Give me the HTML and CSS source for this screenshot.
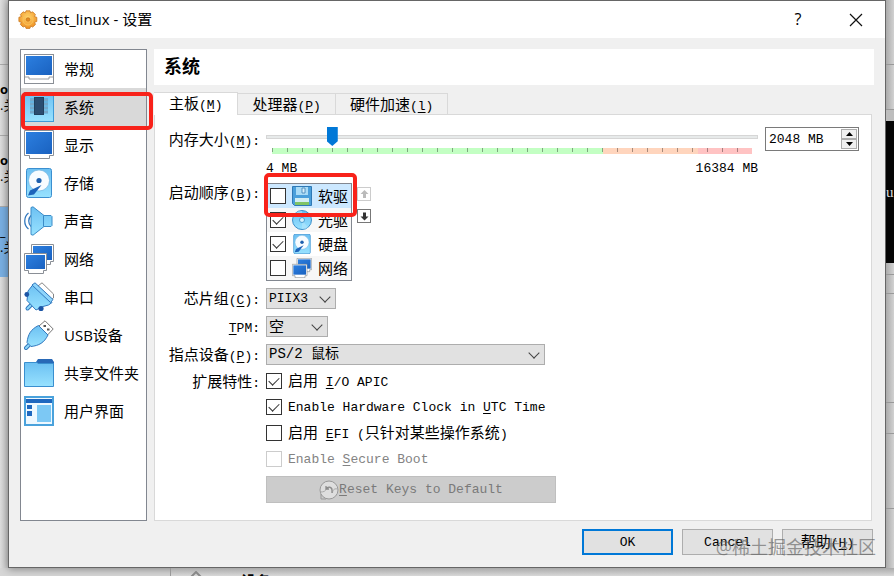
FILE: index.html
```html
<!DOCTYPE html>
<html lang="zh-CN">
<head>
  <meta charset="UTF-8" />
  <meta name="viewport" content="width=device-width, initial-scale=1.0" />
  <title>test_linux - 设置</title>
  <link rel="stylesheet" href="styles.css">
</head>
<body>
  <!-- shared icons -->
  <svg class="defs" width="0" height="0" aria-hidden="true">
    <defs>
      <linearGradient id="screen" x1="0" y1="0" x2="1" y2="1">
        <stop offset="0" stop-color="#2c7fe0" /><stop offset="1" stop-color="#1a62c0" />
      </linearGradient>
      <linearGradient id="sky" x1="0" y1="0" x2="0" y2="1">
        <stop offset="0" stop-color="#6cc0f2" /><stop offset="1" stop-color="#98e2ff" />
      </linearGradient>
      <radialGradient id="gold" cx=".5" cy=".35" r=".7">
        <stop offset="0" stop-color="#ffd36b" /><stop offset="1" stop-color="#ee8b1c" />
      </radialGradient>
      <symbol id="i-disk" viewBox="0 0 30 30">
        <rect x="2.5" y=".5" width="25" height="29" rx="2" fill="url(#sky)" stroke="#3b8fd0" />
        <circle cx="15" cy="12.500" r="10.500" fill="#f7fcff" stroke="#6aaede" stroke-width=".6" />
        <circle cx="15" cy="12.500" r="2.600" fill="#1c5fae" />
        <path d="M17.500 17 14 21.500 10 26.500 4 27.500 6 22.500Z" fill="#1c64bb" />
      </symbol>
      <symbol id="i-net" viewBox="0 0 30 30">
        <path d="M7.500.5h22v17h-3v3H15v-3H7.500Z" fill="#fff" stroke="#8a8f96" />
        <path d="M9 2h19v14H9Z" fill="url(#screen)" />
        <path d="M.5 9.500h22v17h-3v3h-15v-3h-4Z" fill="#fff" stroke="#8a8f96" />
        <path d="M2 11h19v14H2Z" fill="url(#screen)" />
      </symbol>
    </defs>
  </svg>

  <div class="desktop">
    <div class="strip strip-left">
      <div class="vm vm-blank"></div>
      <div class="vm"><b>or</b><span>.关</span></div>
      <div class="vm"><b>or</b><span>.关</span></div>
      <div class="vm vm-selected"><b>_</b><span>.关</span></div>
    </div>

    <main class="dialog">
      <header class="titlebar">
        <svg width="20" height="20" viewBox="0 0 20 20">
          <path d="M8 .8h4l.6 2 2-1 2.800 2.800-1 2 2.400.7v4.200l-2.300.8 1 2.100-2.800 2.700-2-1-.8 2.300H8l-.8-2.300-2.100 1-2.700-2.700 1-2.100-2.500-.8V7.300l2.500-.7-1-2.100 2.700-2.700 2.200 1Z" fill="url(#gold)" stroke="#c9791f" stroke-width=".8" />
          <circle cx="10" cy="10" r="5" fill="none" stroke="#f9c35a" />
          <circle cx="10" cy="9.500" r="1.800" fill="#e58a1f" stroke="#b76b18" stroke-width=".6" />
        </svg>
        <h1>test_linux - 设置</h1>
        <button class="win-btn" type="button" aria-label="帮助">?</button>
        <button class="win-btn" type="button" aria-label="关闭">
          <svg width="14" height="14" viewBox="0 0 14 14"><path d="M1 1l12 12M13 1 1 13" stroke="#111" stroke-width="1.200" /></svg>
        </button>
      </header>

      <div class="content">
        <nav class="sidebar">
          <a href="#general">
            <svg class="icon" viewBox="0 0 30 30">
              <rect x=".5" y=".5" width="29" height="29" fill="#fff" stroke="#8a8f96" />
              <rect x="2" y="2" width="26" height="19" fill="url(#screen)" />
              <path d="M1 23h4v2h20v-2h4" fill="none" stroke="#9a9da1" />
            </svg>
            常规
          </a>
          <a href="#system" class="active">
            <svg class="icon" viewBox="0 0 30 30">
              <rect x=".5" y=".5" width="29" height="29" fill="url(#sky)" stroke="#3e9bd8" />
              <path d="M6 8h18M6 12h18M6 16h18M6 20h18" stroke="#2c6d9c" stroke-width="2.500" />
              <path d="M6 8h18M6 12h18M6 16h18M6 20h18" stroke="#bfe6fa" />
              <rect x="10.500" y="5.500" width="9" height="17" fill="#2b4d70" stroke="#20415f" />
            </svg>
            系统
          </a>
          <a href="#display">
            <svg class="icon" viewBox="0 0 30 30">
              <path d="M.5.500h29v25h-4v3h-20v-3h-5Z" fill="#fff" stroke="#8a8f96" />
              <rect x="2" y="2" width="26" height="22" fill="url(#screen)" />
            </svg>
            显示
          </a>
          <a href="#storage">
            <svg class="icon"><use href="#i-disk" /></svg>
            存储
          </a>
          <a href="#audio">
            <svg class="icon" viewBox="0 0 30 30">
              <path d="M4.500 7c-5 4-5 12 0 16M7 9.500c-3 3-3 8 0 11" fill="none" stroke="#3278be" stroke-width="1.300" />
              <path d="M7 1.500 9 .8 20 9.500h7l1 1v9l-1 1h-7L9 29.200 7 28.500Z" fill="url(#sky)" stroke="#3b8cc8" />
              <path d="M19.500 9.500v11" stroke="#3b8cc8" />
            </svg>
            声音
          </a>
          <a href="#network">
            <svg class="icon"><use href="#i-net" /></svg>
            网络
          </a>
          <a href="#serial">
            <svg class="icon" viewBox="0 0 30 30">
              <path d="M14 4 18 .8 29.500 12v4l-3 2Z" fill="#fff" stroke="#858585" />
              <path d="M3.500 26.500 7 23" stroke="#3278be" stroke-width="4" stroke-linecap="round" />
              <path d="M3.500 26.500 7 23" stroke="#8fd8fb" stroke-width="2" stroke-linecap="round" />
              <path d="M9.500 2 28 20.500 24.500 23 19 24.500 12 28 3 18.500 4 9Z" fill="url(#sky)" stroke="#3278be" />
              <path d="M8 3 11 .8 29 17.500 26.500 20.500Z" fill="#8ed5fb" stroke="#3278be" />
              <circle cx="2.800" cy="12.500" r="2.400" fill="#1c55a5" /><circle cx="17" cy="26.500" r="2.600" fill="#1c55a5" />
            </svg>
            串口
          </a>
          <a href="#usb">
            <svg class="icon" viewBox="0 0 30 30">
              <path d="M15 6 21 .8 29.200 9 23 15.500Z" fill="#fff" stroke="#777" />
              <path d="M19.500 5h2.500v2h-2.500ZM23 8.500h2.500v2H23Z" fill="#555" />
              <path d="M2 28 5.500 24.500" stroke="#3278be" stroke-width="4" stroke-linecap="round" />
              <path d="M2 28 5.500 24.500" stroke="#8fd8fb" stroke-width="2" stroke-linecap="round" />
              <path d="M14.500 5.500 24 15c-4 8-9 10.500-17 11.500L3 22.500C4 14.500 6.500 9.500 14.500 5.500Z" fill="url(#sky)" stroke="#3278be" />
            </svg>
            USB设备
          </a>
          <a href="#shared">
            <svg class="icon" viewBox="0 0 30 30">
              <path d="M12 4 14 1h14l2 3v3H12Z" fill="#2969b7" />
              <path d="M.5 4.500H13l1 1h15.500v23H.500Z" fill="url(#sky)" stroke="#3a8fcf" />
            </svg>
            共享文件夹
          </a>
          <a href="#ui">
            <svg class="icon" viewBox="0 0 30 30">
              <rect x="1" y="1" width="28" height="28" fill="#eef8ff" stroke="#4aa2dc" stroke-width="2" />
              <rect x="2" y="3" width="26" height="4" fill="#1f68bf" />
              <path d="M3 9h5v4H3ZM3 15h5v5H3Z" fill="#1f68bf" />
              <rect x="13" y="9" width="14" height="17" fill="#7cc8f4" />
            </svg>
            用户界面
          </a>
        </nav>

        <section class="panel">
          <h2>系统</h2>
          <div class="tabs" role="tablist">
            <button class="tab selected" type="button" role="tab" aria-selected="true">主板<span class="en">(<u>M</u>)</span></button>
            <button class="tab" type="button" role="tab">处理器<span class="en">(<u>P</u>)</span></button>
            <button class="tab" type="button" role="tab">硬件加速<span class="en">(<u>l</u>)</span></button>
          </div>

          <form class="pane">
            <label class="name name-memory" for="memory">内存大小<span class="en">(<u>M</u>):</span></label>
            <div class="memory">
              <div class="slider">
                <input type="range" id="memory" min="4" max="16384" value="2048">
                <div class="scale"></div>
                <div class="limits en"><span>4 MB</span><span>16384 MB</span></div>
              </div>
              <div class="spin">
                <input class="en" type="text" value="2048 MB" aria-label="内存大小">
                <div class="spin-buttons">
                  <button type="button" aria-label="增加"><svg width="7" height="4" viewBox="0 0 7 4"><path d="M0 4 3.500 0 7 4Z" /></svg></button>
                  <button type="button" aria-label="减少"><svg width="7" height="4" viewBox="0 0 7 4"><path d="M0 0 3.500 4 7 0Z" /></svg></button>
                </div>
              </div>
            </div>

            <span class="name name-short">启动顺序<span class="en">(<u>B</u>):</span></span>
            <div class="boot">
              <div class="boot-list">
                <label class="boot-item current">
                  <input type="checkbox">
                  <svg class="icon-small" viewBox="0 0 20 20">
                    <path d="M.5.500h19v19h-17l-2-2Z" fill="#4a9fdb" stroke="#2f79b5" />
                    <path d="M4 1h12v8H4Z" fill="#a9dbf6" /><path d="M10 2h3v5h-3Z" fill="#d9f0fb" stroke="#3a7fb5" stroke-width=".8" />
                    <path d="M3 12h14v7H3Z" fill="#d2edf3" /><path d="M3 16h14v3H3Z" fill="#80c466" />
                  </svg>
                  软驱
                </label>
                <label class="boot-item">
                  <input type="checkbox" checked>
                  <svg class="icon-small" viewBox="0 0 20 20">
                    <circle cx="10" cy="10" r="9.500" fill="url(#sky)" stroke="#3d8fc9" />
                    <path d="M10 10 4 2.500A9 9 0 0 1 10 1ZM10 10l6 7.500a9 9 0 0 1-6 1.500Z" fill="#b4e6fc" opacity=".6" />
                    <circle cx="10" cy="10" r="2.500" fill="#d5f1fd" stroke="#4b9ed2" />
                  </svg>
                  光驱
                </label>
                <label class="boot-item">
                  <input type="checkbox" checked>
                  <svg class="icon-small"><use href="#i-disk" /></svg>
                  硬盘
                </label>
                <label class="boot-item">
                  <input type="checkbox">
                  <svg class="icon-small"><use href="#i-net" /></svg>
                  网络
                </label>
              </div>
              <div class="move">
                <button type="button" disabled aria-label="上移"><svg width="9" height="9" viewBox="0 0 9 9"><path d="M4.500 0 8.500 4H6v4H3V4H.5Z" /></svg></button>
                <button type="button" aria-label="下移"><svg width="9" height="9" viewBox="0 0 9 9"><path d="M4.500 8.500.5 4.500H3V.5h3v4h2.500Z" /></svg></button>
              </div>
            </div>

            <label class="name" for="chipset">芯片组<span class="en">(<u>C</u>):</span></label>
            <div class="select select-chipset"><select class="en" id="chipset"><option>PIIX3</option></select></div>

            <label class="name" for="tpm"><span class="en"><u>T</u>PM:</span></label>
            <div class="select select-tpm"><select id="tpm"><option>空</option></select></div>

            <label class="name" for="pointing">指点设备<span class="en">(<u>P</u>):</span></label>
            <div class="select select-pointing"><select class="mixed" id="pointing"><option>PS/2 鼠标</option></select></div>

            <span class="name name-short">扩展特性<span class="en">:</span></span>
            <div class="features">
              <label><input type="checkbox" checked><span>启用<span class="en"> <u>I</u>/O APIC</span></span></label>
              <label><input type="checkbox" checked><span class="en">Enable Hardware Clock in <u>U</u>TC Time</span></label>
              <label><input type="checkbox"><span>启用<span class="en"> <u>E</u>FI (</span>只针对某些操作系统<span class="en">)</span></span></label>
              <label class="off"><input type="checkbox" disabled><span class="en">Enable <u>S</u>ecure Boot</span></label>
              <button class="reset en" type="button" disabled>
                <svg width="20" height="20" viewBox="0 0 20 20">
                  <circle cx="10" cy="10" r="9" fill="#dedede" stroke="#999" />
                  <path d="M1.500 12c3 0 5-.5 6-3.500M18.500 9c-4-1-5 2-5 4" fill="none" stroke="#aaa" />
                  <path d="M7 9c2-3 6-2 6 1v3M7 6v3h3" fill="none" stroke="#8b8b8b" stroke-width="1.300" />
                  <path d="M2 14v5h5" fill="none" stroke="#999" />
                </svg>
                <span><u>R</u>eset Keys to Default</span>
              </button>
            </div>
          </form>
        </section>
      </div>

      <footer class="actions">
        <button class="primary en" type="button">OK</button>
        <button class="en" type="button">Cancel</button>
        <button type="button">帮助<span class="en">(<u>H</u>)</span></button>
        <span class="watermark">@稀土掘金技术社区</span>
      </footer>
    </main>

    <div class="strip strip-right">
      <div class="row row-first"></div>
      <div class="row row-second"></div>
      <div class="preview">u</div>
      <div class="row row-gap"></div>
      <div class="row row-small"></div>
      <div class="row row-tall"></div>
      <div class="row row-medium"></div>
      <div class="row row-last"></div>
    </div>

    <div class="strip strip-bottom">
      <svg width="14" height="14" viewBox="0 0 14 14"><path d="M1 7 7 1l6 6" fill="none" stroke="#888" stroke-width="2" /></svg>
      <b>设备</b>
    </div>
  </div>
</body>
</html>
```

FILE: styles.css
```css
* {
  box-sizing: border-box;
}
body {
  margin: 0;
  background: #d6d6d6;
  color: #000;
  font-family: "Open Sans", "Noto Sans CJK SC", sans-serif;
  font-size: 15px;
  line-height: 21px;
}
button, input, select {
  margin: 0;
  padding: 0;
  color: inherit;
  font: inherit;
}
svg {
  display: block;
  flex: none;
}
u {
  text-underline-offset: 2px;
}
.defs {
  position: absolute;
}
.en {
  font-family: "Liberation Mono", "Noto Sans CJK SC", monospace;
  font-size: 13px;
  white-space: pre;
}
.desktop {
  display: grid;
  grid-template-columns: 9px minmax(0, 1fr) 8px;
  grid-template-rows: 1fr 8px;
  height: 100vh;
  overflow: hidden;
}

/* windows behind the dialog */
.strip {
  overflow: hidden;
}
.strip-left {
  background: linear-gradient(to right, #dedede, #c4c4c4);
}
.vm {
  height: 71px;
  padding-top: 16px;
  border-top: 1px solid #aaa;
  font-size: 13px;
  line-height: 16px;
  white-space: nowrap;
}
.vm b, .vm span {
  display: block;
}
.vm-blank {
  height: 64px;
  border: 0;
}
.vm-selected {
  background: #79afe2;
}
.strip-right {
  background: linear-gradient(to right, #ababab, #d2d2d2);
}
.row {
  border-bottom: 1px solid #999;
}
.row-first {
  height: 65px;
}
.row-second {
  height: 45px;
}
.preview {
  height: 153px;
  padding-top: 61px;
  border-top: 11px solid #bdbdbd;
  background: #050505;
  color: #ddd;
  font-family: "Liberation Serif", serif;
}
.row-gap {
  height: 12px;
}
.row-small {
  height: 19px;
}
.row-tall {
  height: 109px;
}
.row-medium {
  height: 31px;
}
.row-last {
  height: 75px;
}
.strip-bottom {
  grid-column: 1 / -1;
  display: flex;
  gap: 38px;
  margin-left: 170px;
  padding: 3px 0 0 18px;
  border-left: 1px solid #999;
  background: linear-gradient(#aaa, #d8d8d8);
}

/* dialog */
.dialog {
  display: flex;
  flex-direction: column;
  margin-left: -1px;
  border: 1px solid #666;
  background: #f0f0f0;
  box-shadow: 0 1px 8px rgba(0, 0, 0, 0.4);
}
.titlebar {
  display: flex;
  align-items: center;
  height: 37px;
  padding-left: 9px;
  background: #fff;
}
.titlebar h1 {
  flex: 1;
  margin: 0 0 0 5px;
  font-size: 15px;
  font-weight: 400;
}
.win-btn {
  display: flex;
  align-items: center;
  justify-content: center;
  width: 58px;
  height: 37px;
  border: 0;
  background: none;
  font-size: 16px;
}
.content {
  display: flex;
  flex: 1;
  gap: 7px;
  padding: 11px 11px 0;
}
.sidebar {
  flex: none;
  width: 127px;
  border: 1px solid #828790;
  background: #fff;
}
.sidebar a {
  position: relative;
  display: flex;
  align-items: center;
  gap: 10px;
  height: 38px;
  padding-left: 3px;
  color: #000;
  text-decoration: none;
  white-space: nowrap;
}
.sidebar .active {
  background: #d9d9d9;
}
.icon {
  width: 30px;
  height: 30px;
}
/* red highlight frames */
.sidebar .active::after,
.current::after {
  content: "";
  position: absolute;
  z-index: 1;
  border: 4px solid #f8221a;
  border-radius: 5px;
  pointer-events: none;
}
.sidebar .active::after {
  inset: 4px -7px -4px 0;
}
.panel {
  display: flex;
  flex: 1;
  flex-direction: column;
  min-width: 0;
}
.panel h2 {
  margin: 0 0 7px;
  padding: 7px 10px 8px;
  background: #fff;
  font-size: 18px;
  line-height: 21px;
}
.tabs {
  display: flex;
  align-items: flex-end;
}
.tab {
  height: 21px;
  padding: 0 14px;
  border: 1px solid #d9d9d9;
  border-width: 1px 1px 0 0;
  background: #f0f0f0;
  line-height: 20px;
}
.tab.selected {
  position: relative;
  height: 23px;
  margin-bottom: -1px;
  padding: 0 15px;
  background: #fff;
}
.pane {
  display: grid;
  flex: 1;
  grid-template-columns: 105px minmax(0, 1fr);
  align-content: start;
  gap: 7px 6px;
  margin-right: 2px;
  padding: 12px 12px 15px 0;
  border: 1px solid #d9d9d9;
  background: #fff;
}
.name {
  height: 21px;
  text-align: right;
  white-space: nowrap;
}
.name-memory {
  line-height: 24px;
}
.name-short {
  height: 18px;
  line-height: 18px;
}
.memory {
  display: flex;
  align-items: flex-start;
  gap: 7px;
}
.slider {
  flex: 1;
}
input[type="range"] {
  display: block;
  width: 100%;
  height: 20px;
  appearance: none;
  background: none;
}
input[type="range"]::-webkit-slider-runnable-track {
  height: 4px;
  border: 1px solid #d6d6d6;
  background: #e7eaea;
}
input[type="range"]::-webkit-slider-thumb {
  width: 11px;
  height: 19px;
  margin-top: -9px;
  appearance: none;
  background: #0078d7;
  clip-path: polygon(0 0, 100% 0, 100% 75%, 50% 100%, 0 75%);
}
.scale {
  height: 6px;
  margin: 1px 6px 0;
  background:
    repeating-linear-gradient(to right, rgba(0, 0, 0, 0.35) 0 1px, transparent 1px 15px) 0 0 / 100% 4px no-repeat,
    linear-gradient(to right, #c3ffc3 69%, #ffd5bd 69% 88.75%, #ffc3c3 88.75%);
}
.limits {
  display: flex;
  justify-content: space-between;
  margin-top: 7px;
  line-height: 15px;
}
.spin {
  display: flex;
  width: 94px;
  height: 24px;
  padding: 1px;
  border: 1px solid #7a7a7a;
}
.spin input {
  flex: 1;
  min-width: 0;
  padding-left: 2px;
  border: 0;
  outline: 0;
}
.spin-buttons {
  display: grid;
  width: 16px;
}
.spin-buttons button {
  display: flex;
  align-items: center;
  justify-content: center;
  border: 1px solid #acacac;
  background: #f0f0f0;
}
input[type="checkbox"] {
  display: flex;
  flex: none;
  justify-content: center;
  width: 16px;
  height: 16px;
  padding-top: 1px;
  appearance: none;
  border: 1px solid #333;
  background: #fff;
}
input[type="checkbox"]:checked::after {
  content: "";
  width: 5px;
  height: 9px;
  border: solid #333;
  border-width: 0 1px 1px 0;
  transform: rotate(45deg);
}
input[type="checkbox"]:disabled {
  border-color: #ccc;
}
.boot {
  display: flex;
  gap: 5px;
  align-items: flex-start;
}
.boot-list {
  width: 86px;
  border: 1px solid #828790;
  background: #fff;
}
.boot-item {
  position: relative;
  display: flex;
  align-items: center;
  height: 24px;
  padding-left: 3px;
  white-space: nowrap;
}
.boot-item:nth-child(even) {
  background: #f7f7f7;
}
.boot-item.current {
  background: #cce8ff;
}
.current::after {
  inset: -11px -6px -9px -3px;
}
.icon-small {
  width: 20px;
  height: 20px;
  margin: 0 6px;
}
.move {
  display: grid;
  gap: 8px;
  padding-top: 4px;
}
.move button {
  display: flex;
  align-items: center;
  justify-content: center;
  width: 14px;
  height: 14px;
  border: 1px solid #777;
  background: #fff;
  fill: #333;
}
.move button:disabled {
  border-color: #ccc;
  fill: #bbb;
}
.select {
  position: relative;
}
.select select {
  display: block;
  width: 100%;
  height: 21px;
  padding-left: 2px;
  appearance: none;
  border: 1px solid #adadad;
  border-radius: 0;
  background: #e1e1e1;
  line-height: 19px;
}
.select .mixed {
  font-family: "Liberation Mono", "Noto Sans CJK SC", monospace;
  font-size: 14px;
}
.select::after {
  content: "";
  position: absolute;
  top: 5px;
  right: 7px;
  width: 7px;
  height: 7px;
  border: solid #444;
  border-width: 0 1px 1px 0;
  transform: rotate(45deg);
  pointer-events: none;
}
.select-chipset {
  width: 70px;
}
.select-tpm {
  width: 62px;
}
.select-pointing {
  width: 279px;
}
.features {
  display: grid;
  gap: 8px;
  justify-content: start;
}
.features label {
  display: flex;
  align-items: center;
  gap: 6px;
  height: 18px;
}
.features .off {
  color: #838383;
}
.reset {
  display: flex;
  align-items: center;
  justify-content: center;
  width: 290px;
  height: 27px;
  border: 1px solid #bfbfbf;
  background: #ccc;
  color: #7a7a7a;
}
.actions {
  position: relative;
  display: flex;
  justify-content: flex-end;
  gap: 9px;
  padding: 8px 12px 12px;
}
.actions button {
  width: 91px;
  height: 26px;
  border: 1px solid #adadad;
  background: #e1e1e1;
}
.actions .primary {
  border: 2px solid #0078d7;
}
.watermark {
  position: absolute;
  right: 9px;
  bottom: 9px;
  color: rgba(90, 90, 90, 0.6);
  font-size: 18px;
  white-space: nowrap;
}
```
